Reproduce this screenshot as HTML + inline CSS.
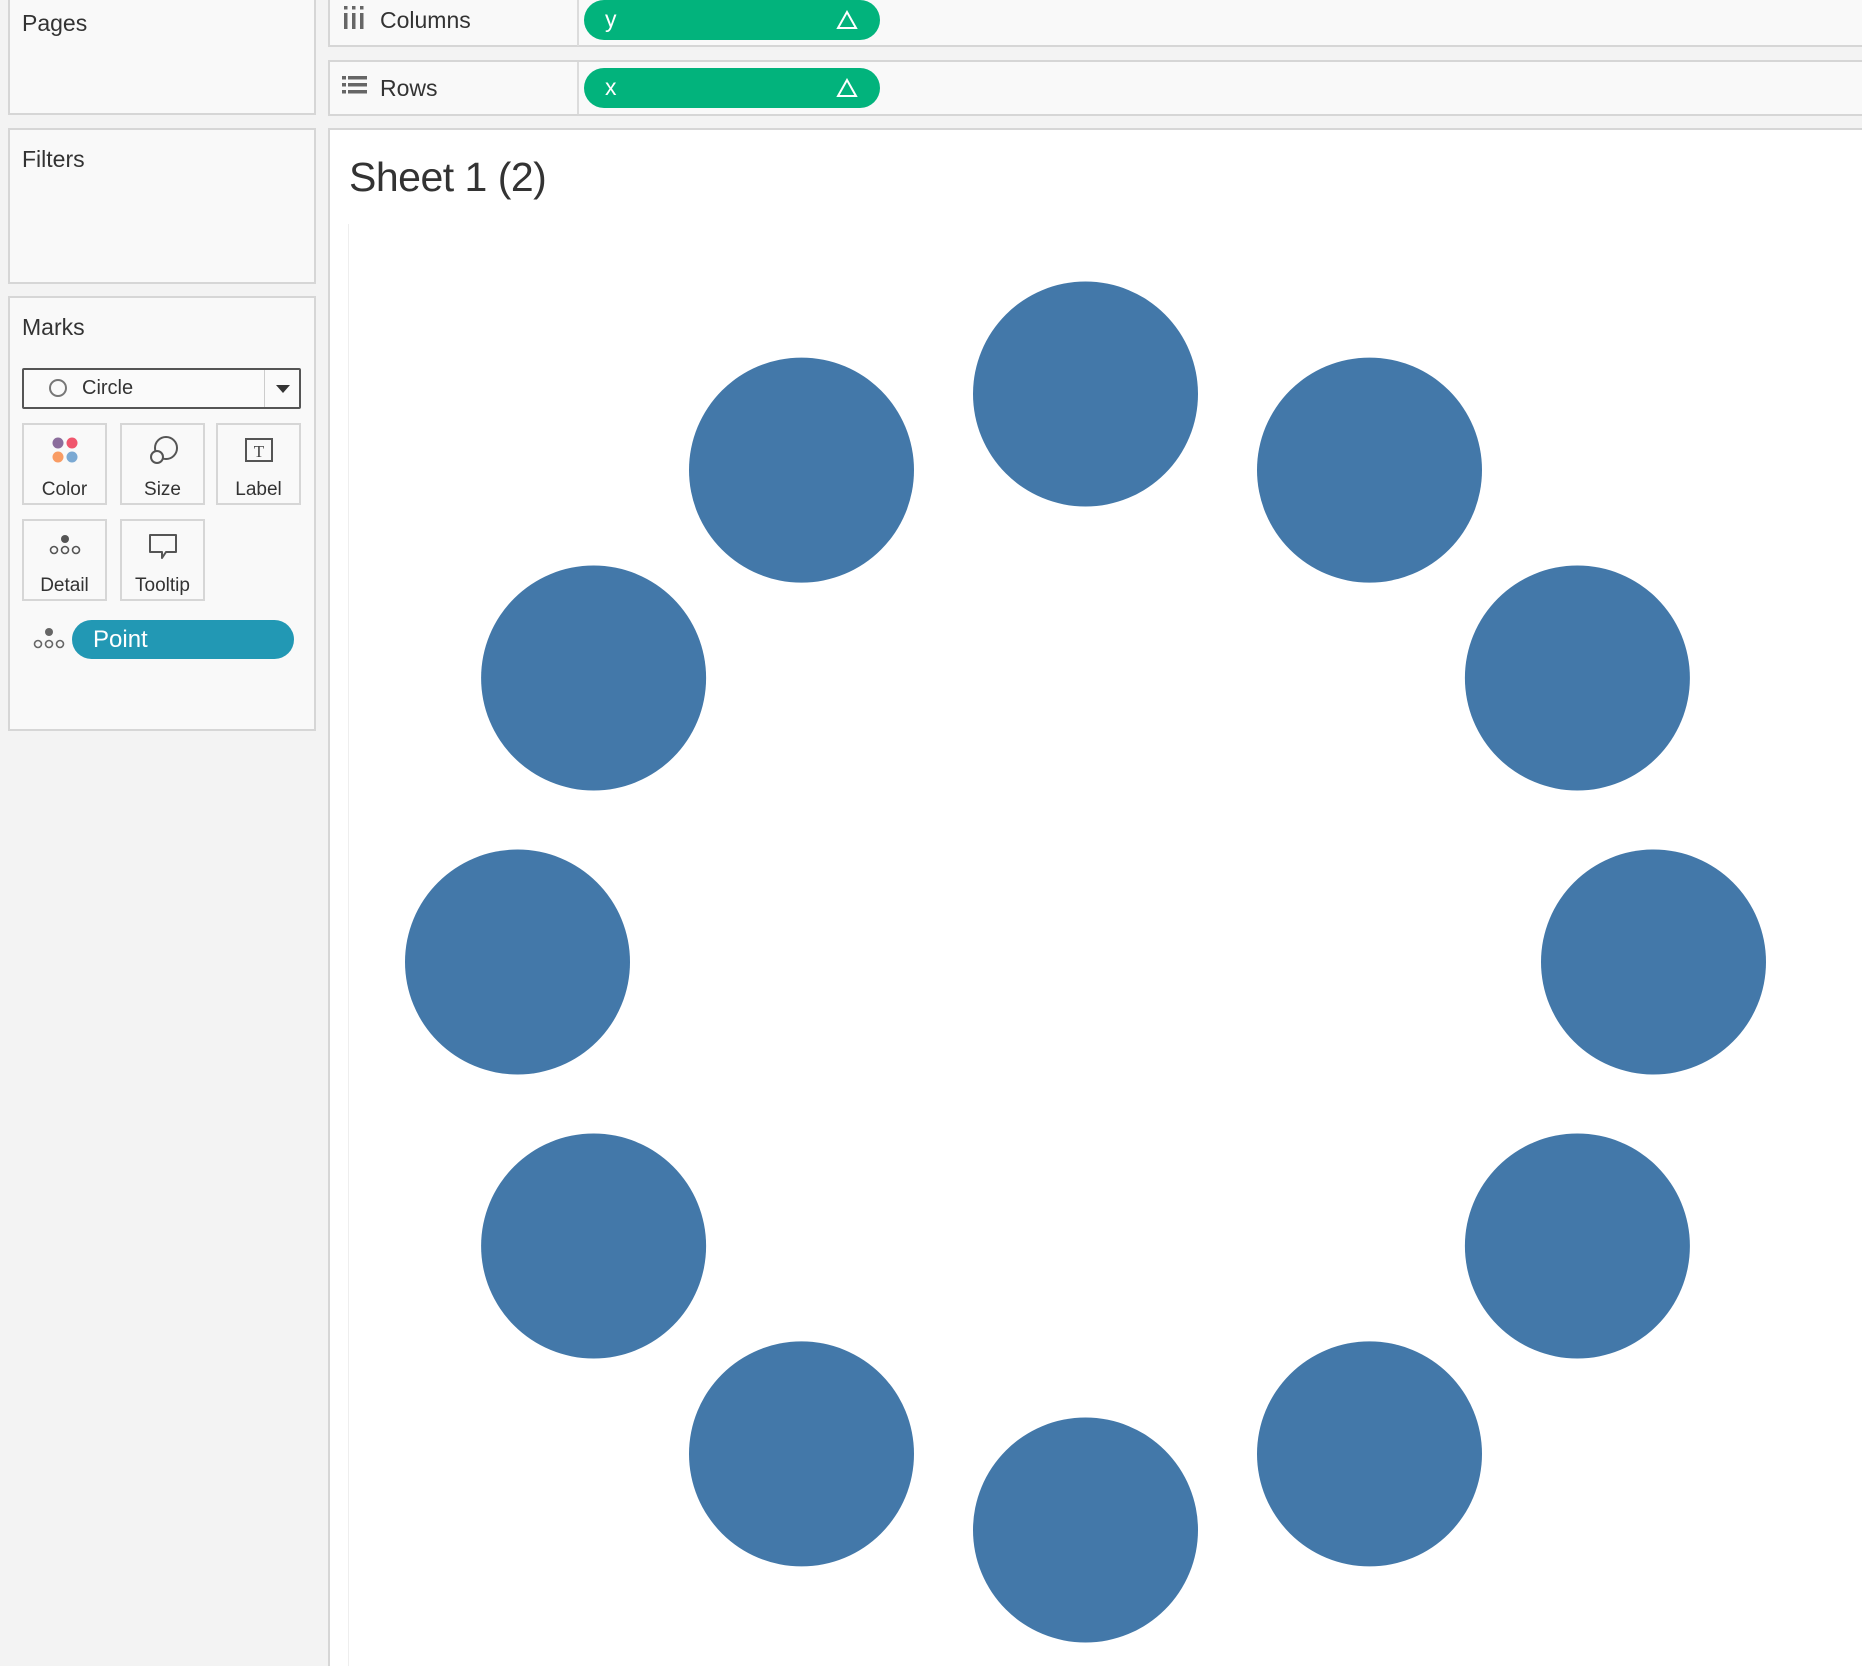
<!DOCTYPE html>
<html style="width:1862px;height:1666px;overflow:hidden"><head><meta charset="utf-8"><style>
*{margin:0;padding:0;box-sizing:border-box}
body{width:1862px;height:1666px;background:#f3f3f3;position:relative;overflow:hidden;font-family:"Liberation Sans",sans-serif;color:#333}
.box{position:absolute;background:#f9f9f9;border:2px solid #d6d6d6}
.t{position:absolute;white-space:nowrap}
.pill{position:absolute;background:#02b37c;border-radius:20px;color:#fff}
.btn{position:absolute;border:2px solid #d6d6d6;background:#f9f9f9;width:85px;height:82px}
.btn .l{position:absolute;left:0;right:0;top:54px;text-align:center;font-size:19px;color:#333}
.btn svg{position:absolute;left:50%;top:10px;transform:translateX(-50%)}
</style></head><body>
<div class="box" style="left:8px;top:-4px;width:308px;height:119px"></div>
<div class="t" style="left:22px;top:10px;font-size:23px">Pages</div>
<div class="box" style="left:8px;top:128px;width:308px;height:156px"></div>
<div class="t" style="left:22px;top:146px;font-size:23px">Filters</div>
<div class="box" style="left:8px;top:296px;width:308px;height:435px"></div>
<div class="t" style="left:22px;top:314px;font-size:23px">Marks</div>

<div style="position:absolute;left:22px;top:368px;width:279px;height:41px;border:2px solid #555;background:#fafafa;border-radius:2px"></div>
<div style="position:absolute;left:264px;top:370px;width:1px;height:37px;background:#ccc"></div>
<div style="position:absolute;left:49px;top:379px;width:18px;height:18px;border:2px solid #777;border-radius:50%"></div>
<div class="t" style="left:82px;top:377px;font-size:20px">Circle</div>
<div style="position:absolute;left:276px;top:385px;border-left:7px solid transparent;border-right:7px solid transparent;border-top:8px solid #333"></div>

<div class="btn" style="left:22px;top:423px"><svg width="30" height="30" viewBox="0 0 30 30"><circle cx="8" cy="8" r="5.5" fill="#8b6d9c"/><circle cx="22" cy="8" r="5.5" fill="#f0566d"/><circle cx="8" cy="22" r="5.5" fill="#f99c64"/><circle cx="22" cy="22" r="5.5" fill="#7ba9d3"/></svg><div class="l">Color</div></div>
<div class="btn" style="left:120px;top:423px"><svg width="32" height="32" viewBox="0 0 32 32"><circle cx="19" cy="13" r="11" fill="none" stroke="#555" stroke-width="2"/><circle cx="10" cy="22" r="6" fill="#f9f9f9" stroke="#555" stroke-width="2"/></svg><div class="l">Size</div></div>
<div class="btn" style="left:216px;top:423px"><svg width="30" height="30" viewBox="0 0 30 30"><rect x="2" y="4" width="26" height="22" fill="none" stroke="#555" stroke-width="2"/><text x="15" y="22" font-size="17" text-anchor="middle" font-family="Liberation Serif" fill="#444">T</text></svg><div class="l">Label</div></div>
<div class="btn" style="left:22px;top:519px"><svg width="34" height="30" viewBox="0 0 34 30"><circle cx="17" cy="8" r="4" fill="#555"/><circle cx="6" cy="19" r="3.5" fill="none" stroke="#555" stroke-width="1.6"/><circle cx="17" cy="19" r="3.5" fill="none" stroke="#555" stroke-width="1.6"/><circle cx="28" cy="19" r="3.5" fill="none" stroke="#555" stroke-width="1.6"/></svg><div class="l">Detail</div></div>
<div class="btn" style="left:120px;top:519px"><svg width="32" height="32" viewBox="0 0 32 32"><path d="M3 4H29V21H19L15 27V21H3Z" fill="none" stroke="#555" stroke-width="2" stroke-linejoin="round"/></svg><div class="l">Tooltip</div></div>

<svg style="position:absolute;left:32px;top:627px" width="34" height="26" viewBox="0 0 34 26"><circle cx="17" cy="5" r="4" fill="#666"/><circle cx="6" cy="17" r="3.5" fill="none" stroke="#666" stroke-width="1.6"/><circle cx="17" cy="17" r="3.5" fill="none" stroke="#666" stroke-width="1.6"/><circle cx="28" cy="17" r="3.5" fill="none" stroke="#666" stroke-width="1.6"/></svg>
<div class="pill" style="left:72px;top:620px;width:222px;height:39px;background:#2298b4"><span class="t" style="left:21px;top:6px;font-size:24px">Point</span></div>

<div class="box" style="left:328px;top:-4px;width:1534px;height:51px;border-right:none"></div>
<div style="position:absolute;left:577px;top:0;width:2px;height:46px;background:#dcdcdc"></div>
<svg style="position:absolute;left:343px;top:6px" width="22" height="24" viewBox="0 0 22 24"><rect x="1" y="0" width="3.5" height="3.5" fill="#666"/><rect x="9" y="0" width="3.5" height="3.5" fill="#666"/><rect x="17" y="0" width="3.5" height="3.5" fill="#666"/><rect x="1" y="7" width="3.5" height="16" fill="#666"/><rect x="9" y="7" width="3.5" height="16" fill="#666"/><rect x="17" y="7" width="3.5" height="16" fill="#666"/></svg>
<div class="t" style="left:380px;top:7px;font-size:23px">Columns</div>
<div class="pill" style="left:584px;top:0;width:296px;height:40px"><span class="t" style="left:21px;top:6px;font-size:23px">y</span><svg style="position:absolute;left:252px;top:10px" width="22" height="20" viewBox="0 0 22 20"><path d="M11 2L20 18H2Z" fill="none" stroke="#fff" stroke-width="2"/></svg></div>

<div class="box" style="left:328px;top:60px;width:1534px;height:56px;border-right:none"></div>
<div style="position:absolute;left:577px;top:62px;width:2px;height:52px;background:#dcdcdc"></div>
<svg style="position:absolute;left:342px;top:76px" width="26" height="20" viewBox="0 0 26 20"><rect x="0" y="0" width="4" height="3.5" fill="#666"/><rect x="6" y="0" width="19" height="3.5" fill="#666"/><rect x="0" y="7" width="4" height="3.5" fill="#666"/><rect x="6" y="7" width="19" height="3.5" fill="#666"/><rect x="0" y="14" width="4" height="3.5" fill="#666"/><rect x="6" y="14" width="19" height="3.5" fill="#666"/></svg>
<div class="t" style="left:380px;top:75px;font-size:23px">Rows</div>
<div class="pill" style="left:584px;top:68px;width:296px;height:40px"><span class="t" style="left:21px;top:6px;font-size:23px">x</span><svg style="position:absolute;left:252px;top:10px" width="22" height="20" viewBox="0 0 22 20"><path d="M11 2L20 18H2Z" fill="none" stroke="#fff" stroke-width="2"/></svg></div>

<div style="position:absolute;left:328px;top:128px;width:1534px;height:1538px;background:#fff;border:2px solid #d6d6d6;border-right:none;border-bottom:none"></div>
<div class="t" style="left:349px;top:154px;font-size:41px;color:#333;letter-spacing:-0.5px">Sheet 1 (2)</div>
<div style="position:absolute;left:348px;top:224px;width:1px;height:1442px;background:#eee"></div>

<svg style="position:absolute;left:0;top:0" width="1862" height="1666">
<g fill="#4378a9">
<circle cx="1085.5" cy="394" r="112.5"/>
<circle cx="1369.5" cy="470.1" r="112.5"/>
<circle cx="1577.4" cy="678" r="112.5"/>
<circle cx="1653.5" cy="962" r="112.5"/>
<circle cx="1577.4" cy="1246" r="112.5"/>
<circle cx="1369.5" cy="1453.9" r="112.5"/>
<circle cx="1085.5" cy="1530" r="112.5"/>
<circle cx="801.5" cy="1453.9" r="112.5"/>
<circle cx="593.6" cy="1246" r="112.5"/>
<circle cx="517.5" cy="962" r="112.5"/>
<circle cx="593.6" cy="678" r="112.5"/>
<circle cx="801.5" cy="470.1" r="112.5"/>
</g></svg>
</body></html>
